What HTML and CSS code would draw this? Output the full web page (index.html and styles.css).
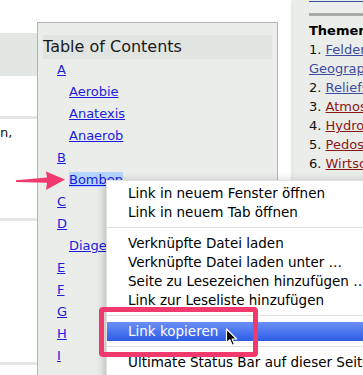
FILE: index.html
```html
<!DOCTYPE html>
<html lang="de">
<head>
<meta charset="utf-8">
<title>Table of Contents</title>
<link rel="stylesheet" href="styles.css">
</head>
<body>
<div class="page">
  <div class="main">
    <div class="band"></div>
    <div class="rule r1"></div>
    <p class="frag">n,</p>
    <div class="rule r2"></div>
    <div class="rule r3"></div>
  </div>
  <div class="toc">
    <div class="toc-head">Table of Contents</div>
    <ul class="toc-list">
      <li><a href="#a">A</a></li>
      <li class="l2"><a href="#aerobie">Aerobie</a></li>
      <li class="l2"><a href="#anatexis">Anatexis</a></li>
      <li class="l2"><a href="#anaerob">Anaerob</a></li>
      <li><a href="#b">B</a></li>
      <li class="l2"><a class="sel" href="#bomben">Bomben</a></li>
      <li><a href="#c">C</a></li>
      <li><a href="#d">D</a></li>
      <li class="l2"><a href="#diagenese">Diagenese</a></li>
      <li><a href="#e">E</a></li>
      <li><a href="#f">F</a></li>
      <li><a href="#g">G</a></li>
      <li><a href="#h">H</a></li>
      <li><a href="#i">I</a></li>
    </ul>
  </div>
  <div class="gap"></div>
  <aside class="side">
    <div class="home"><a class="v" href="#start">Startseite</a></div>
    <div class="side-rule"></div>
    <div class="side-title">Themen</div>
    <ol class="side-list">
      <li>1. <a class="v" href="#t1">Felder der<br>Geographie</a></li>
      <li>2. <a class="v" href="#t2">Reliefsphäre</a></li>
      <li>3. <a class="r" href="#t3">Atmosphäre</a></li>
      <li>4. <a class="r" href="#t4">Hydrosphäre</a></li>
      <li>5. <a class="r" href="#t5">Pedosphäre</a></li>
      <li>6. <a class="r" href="#t6">Wirtschaft</a></li>
    </ol>
  </aside>
</div>

<svg class="arrow" width="70" height="30" viewBox="0 0 70 30">
  <polygon points="16,14.3 47,11.6 46,5.5 65,13.5 46,24 47,16.8 16,15.9" fill="#f0396c"/>
</svg>

<div class="menu">
  <div class="mi">Link in neuem Fenster öffnen</div>
  <div class="mi">Link in neuem Tab öffnen</div>
  <div class="sep"></div>
  <div class="mi">Verknüpfte Datei laden</div>
  <div class="mi">Verknüpfte Datei laden unter …</div>
  <div class="mi">Seite zu Lesezeichen hinzufügen …</div>
  <div class="mi">Link zur Leseliste hinzufügen</div>
  <div class="sep"></div>
  <div class="mi hl">Link kopieren</div>
  <div class="sep"></div>
  <div class="mi">Ultimate Status Bar auf dieser Seite</div>
</div>

<div class="callout"></div>

<svg class="cursor" width="13" height="19" viewBox="0 0 13 19">
  <path d="M1.5 1 L1.5 15 L4.8 11.8 L7.2 17.2 L9.4 16.2 L7.1 11 L11.6 11 Z" fill="#000" stroke="#fff" stroke-width="1.2" stroke-linejoin="round"/>
</svg>
</body>
</html>
```

FILE: styles.css
```css
html, body {
  margin: 0;
  padding: 0;
}

body {
  width: 363px;
  height: 375px;
  overflow: hidden;
  position: relative;
  background: #fff;
  color: #111;
  font-family: "DejaVu Sans", Verdana, sans-serif;
}

.page {
  display: flex;
  align-items: flex-start;
  height: 375px;
}

/* left page content, scrolled mostly out of view */
.main {
  width: 37px;
  flex: none;
  overflow: hidden;
}

.band {
  margin-top: 33px;
  height: 43px;
  background: #e3e7e3;
}

.rule {
  height: 3px;
  background: #e4e6e4;
}

.r1 { margin-top: 40px; }
.r2 { margin-top: 77px; }
.r3 { margin-top: 141px; }

.frag {
  margin: 6px 0 0;
  font-size: 13px;
  line-height: 16px;
  color: #111;
}

/* table of contents box */
.toc {
  flex: none;
  width: 241px;
  height: 420px;
  box-sizing: border-box;
  margin-top: 22px;
  padding: 12px 5px 0;
  border: 1px solid #b3b3b3;
  background: #ebedeb;
}

.toc-head {
  height: 24px;
  line-height: 24px;
  background: #e1e5e1;
  font-size: 16px;
  color: #1a1a1a;
  white-space: nowrap;
}

.toc-list {
  list-style: none;
  margin: 0;
  padding: 0 0 0 14px;
  font-size: 13px;
  line-height: 22px;
}

.toc-list .l2 {
  padding-left: 12px;
}

.toc-list a {
  color: #1c1ce0;
  text-decoration: underline;
}

.toc-list a.sel {
  background: #b4d5fe;
}

.gap {
  width: 15px;
  flex: none;
}

/* right sidebar */
.side {
  flex: 1;
  align-self: stretch;
  min-width: 0;
  padding-left: 16px;
  background: #ebedeb;
  box-shadow: -1px 0 3px rgba(0, 0, 0, 0.18);
  font-size: 13px;
  white-space: nowrap;
  overflow: hidden;
}

.home {
  margin-top: -12px;
  line-height: 16px;
}

.side-rule {
  margin-top: 9px;
  height: 3px;
  background: #a9a9a9;
}

.side-title {
  margin-top: 5px;
  line-height: 19px;
  font-weight: bold;
  color: #000;
}

.side-list {
  list-style: none;
  margin: 0;
  padding: 0;
  line-height: 19px;
  color: #111;
}

.side a.v { color: #3b4ba0; }
.side a.r { color: #8b1616; }

/* pink annotation arrow */
.arrow {
  position: absolute;
  left: 0;
  top: 166px;
}

/* context menu */
.menu {
  position: absolute;
  left: 106px;
  top: 180px;
  width: 290px;
  padding: 3px 0 6px;
  background: #fff;
  border: 1px solid rgba(0, 0, 0, 0.12);
  box-shadow: 0 3px 10px rgba(0, 0, 0, 0.3);
  font-size: 13.5px;
  line-height: 19px;
  color: #000;
  white-space: nowrap;
}

.mi {
  height: 19px;
  padding-left: 21px;
}

.mi.hl {
  background: linear-gradient(#6a90f7, #2c5ce4);
  color: #fff;
}

.sep {
  height: 12px;
  position: relative;
}

.sep::after {
  content: "";
  position: absolute;
  left: 0;
  right: 0;
  top: 5px;
  height: 1px;
  background: #e1e1e1;
}

.callout {
  position: absolute;
  left: 99px;
  top: 307px;
  width: 159px;
  height: 50px;
  box-sizing: border-box;
  border: 5px solid #f0396c;
  border-radius: 4px;
}

.cursor {
  position: absolute;
  left: 225px;
  top: 328px;
}
```
